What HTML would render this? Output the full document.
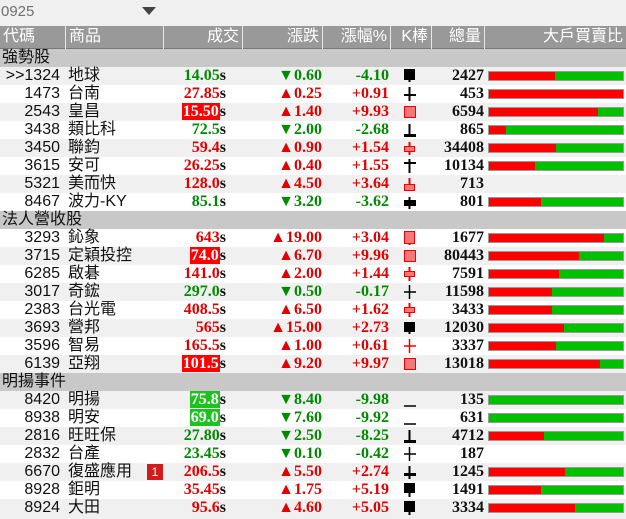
<!DOCTYPE html>
<html><head><meta charset="utf-8">
<style>
*{margin:0;padding:0;box-sizing:border-box}
body{width:626px;height:519px;background:#f0f0f0;overflow:hidden;position:relative;font-family:"Liberation Sans","Noto Sans CJK TC",sans-serif}
.top{position:absolute;left:0;top:0;width:626px;height:26px;background:#f0f0f0}
.top span{position:absolute;left:1px;top:3px;font-size:15px;color:#707070}
.tri{position:absolute;left:142px;top:7px;width:0;height:0;border-left:7px solid transparent;border-right:7px solid transparent;border-top:8px solid #444}
.hdr{position:absolute;left:0;top:26px;width:626px;height:23px;background:#999;border-bottom:1px solid #777}
.hdr div{position:absolute;top:0;height:23px;color:#fff;font-size:16px;line-height:22px;border-right:1px solid #e8e8e8;padding:0 3px}
.row{position:absolute;left:0;width:626px;height:18px;font-size:16px;line-height:18px}
.g{background:#c8c8c8;padding-left:2px;color:#111}
.a{background:#f0f0f0}.b{background:#fff}
.c{position:absolute;left:0;width:60px;text-align:right;color:#111}
.n{position:absolute;left:68px;color:#111}
.num{font-family:"Liberation Serif",serif;font-weight:bold;font-size:16px}
.p{position:absolute;right:400px;text-align:right}
.p i{font-style:normal;color:#111}
.ch{position:absolute;right:304px;text-align:right}
.pc{position:absolute;right:237px;text-align:right}
.v{position:absolute;right:142px;text-align:right;color:#111}
.k{position:absolute;left:402px;top:1px}
.bar{position:absolute;left:488px;top:4px;width:136px;height:10px;background:#00c000;border:1px solid #999}
.bar b{display:block;height:100%;background:#ff0000}
.R{color:#e00000}.G{color:#008a00}
.hr{background:#f00;color:#fff;padding:0 1px}
.hg{background:#1ec21e;color:#fff;padding:0 1px}
.badge{position:absolute;left:147px;top:1px;width:16px;height:16px;background:#d21c1c;color:#fff;font-size:12px;line-height:16px;text-align:center}
</style></head><body>
<div class="top"><span>0925</span><div class="tri"></div></div>
<div class="hdr">
<div style="left:0;width:66px">代碼</div>
<div style="left:66px;width:98px">商品</div>
<div style="left:164px;width:79px;text-align:right">成交</div>
<div style="left:243px;width:80px;text-align:right">漲跌</div>
<div style="left:323px;width:68px;text-align:right">漲幅%</div>
<div style="left:391px;width:41px;text-align:right">K棒</div>
<div style="left:432px;width:53px;text-align:right">總量</div>
<div style="left:485px;width:141px;text-align:right;border:none">大戶買賣比</div>
</div>

<div class="row g" style="top:49px">強勢股</div>
<div class="row a" style="top:67px"><span class="c">&gt;&gt;1324</span><span class="n">地球</span><span class="p num G">14.05<i>s</i></span><span class="ch num G">▼0.60</span><span class="pc num G">-4.10</span><svg class="k" width="16" height="16"><rect x="2" y="1" width="11" height="11" fill="#000"/><line x1="7.5" y1="12" x2="7.5" y2="14" stroke="#000" stroke-width="2"/></svg><span class="v num">2427</span><div class="bar"><b style="width:49%"></b></div></div>
<div class="row b" style="top:85px"><span class="c">1473</span><span class="n">台南</span><span class="p num R">27.85<i>s</i></span><span class="ch num R">▲0.25</span><span class="pc num R">+0.91</span><svg class="k" width="16" height="16"><line x1="7.5" y1="1" x2="7.5" y2="15" stroke="#000" stroke-width="2"/><line x1="2" y1="9" x2="14" y2="9" stroke="#000" stroke-width="2"/></svg><span class="v num">453</span><div class="bar"><b style="width:100%"></b></div></div>
<div class="row a" style="top:103px"><span class="c">2543</span><span class="n">皇昌</span><span class="p num"><span class="hr">15.50</span><i>s</i></span><span class="ch num R">▲1.40</span><span class="pc num R">+9.93</span><svg class="k" width="16" height="16"><rect x="2.5" y="2.5" width="11" height="11" fill="#f47878" stroke="#e00" /></svg><span class="v num">6594</span><div class="bar"><b style="width:81%"></b></div></div>
<div class="row b" style="top:121px"><span class="c">3438</span><span class="n">類比科</span><span class="p num G">72.5<i>s</i></span><span class="ch num G">▼2.00</span><span class="pc num G">-2.68</span><svg class="k" width="16" height="16"><line x1="7.5" y1="2" x2="7.5" y2="13" stroke="#000" stroke-width="2"/><rect x="2" y="12" width="12" height="3" fill="#000"/></svg><span class="v num">865</span><div class="bar"><b style="width:13%"></b></div></div>
<div class="row a" style="top:139px"><span class="c">3450</span><span class="n">聯鈞</span><span class="p num R">59.4<i>s</i></span><span class="ch num R">▲0.90</span><span class="pc num R">+1.54</span><svg class="k" width="16" height="16"><line x1="7.5" y1="2" x2="7.5" y2="15" stroke="#e00" stroke-width="2"/><rect x="2.5" y="6.5" width="10" height="5" fill="#f47878" stroke="#e00"/></svg><span class="v num">34408</span><div class="bar"><b style="width:50%"></b></div></div>
<div class="row b" style="top:157px"><span class="c">3615</span><span class="n">安可</span><span class="p num R">26.25<i>s</i></span><span class="ch num R">▲0.40</span><span class="pc num R">+1.55</span><svg class="k" width="16" height="16"><line x1="7.5" y1="1" x2="7.5" y2="15" stroke="#000" stroke-width="2"/><line x1="2" y1="5" x2="14" y2="5" stroke="#000" stroke-width="2"/></svg><span class="v num">10134</span><div class="bar"><b style="width:34%"></b></div></div>
<div class="row a" style="top:175px"><span class="c">5321</span><span class="n">美而快</span><span class="p num R">128.0<i>s</i></span><span class="ch num R">▲4.50</span><span class="pc num R">+3.64</span><svg class="k" width="16" height="16"><line x1="7.5" y1="2" x2="7.5" y2="9" stroke="#e00" stroke-width="2"/><rect x="2.5" y="8.5" width="10" height="6" fill="#f47878" stroke="#e00"/></svg><span class="v num">713</span></div>
<div class="row b" style="top:193px"><span class="c">8467</span><span class="n">波力-KY</span><span class="p num G">85.1<i>s</i></span><span class="ch num G">▼3.20</span><span class="pc num G">-3.62</span><svg class="k" width="16" height="16"><line x1="7.5" y1="3" x2="7.5" y2="15" stroke="#000" stroke-width="2"/><rect x="2" y="6" width="12" height="6" fill="#000"/></svg><span class="v num">801</span><div class="bar"><b style="width:39%"></b></div></div>

<div class="row g" style="top:211px">法人營收股</div>
<div class="row b" style="top:229px"><span class="c">3293</span><span class="n">鈊象</span><span class="p num R">643<i>s</i></span><span class="ch num R">▲19.00</span><span class="pc num R">+3.04</span><svg class="k" width="16" height="16"><rect x="2.5" y="1.5" width="10" height="12" fill="#f47878" stroke="#e00"/><line x1="7.5" y1="13" x2="7.5" y2="15" stroke="#e00" stroke-width="2"/></svg><span class="v num">1677</span><div class="bar"><b style="width:86%"></b></div></div>
<div class="row a" style="top:247px"><span class="c">3715</span><span class="n">定穎投控</span><span class="p num"><span class="hr">74.0</span><i>s</i></span><span class="ch num R">▲6.70</span><span class="pc num R">+9.96</span><svg class="k" width="16" height="16"><rect x="2.5" y="2.5" width="11" height="11" fill="#f47878" stroke="#e00"/></svg><span class="v num">80443</span><div class="bar"><b style="width:67%"></b></div></div>
<div class="row b" style="top:265px"><span class="c">6285</span><span class="n">啟碁</span><span class="p num R">141.0<i>s</i></span><span class="ch num R">▲2.00</span><span class="pc num R">+1.44</span><svg class="k" width="16" height="16"><line x1="7.5" y1="1" x2="7.5" y2="15" stroke="#e00" stroke-width="2"/><rect x="2.5" y="5.5" width="10" height="5" fill="#f47878" stroke="#e00"/></svg><span class="v num">7591</span><div class="bar"><b style="width:52%"></b></div></div>
<div class="row a" style="top:283px"><span class="c">3017</span><span class="n">奇鋐</span><span class="p num G">297.0<i>s</i></span><span class="ch num G">▼0.50</span><span class="pc num G">-0.17</span><svg class="k" width="16" height="16"><line x1="7.5" y1="1" x2="7.5" y2="15" stroke="#000" stroke-width="1.5"/><line x1="2" y1="8" x2="14" y2="8" stroke="#000" stroke-width="1.5"/></svg><span class="v num">11598</span><div class="bar"><b style="width:47%"></b></div></div>
<div class="row b" style="top:301px"><span class="c">2383</span><span class="n">台光電</span><span class="p num R">408.5<i>s</i></span><span class="ch num R">▲6.50</span><span class="pc num R">+1.62</span><svg class="k" width="16" height="16"><line x1="7.5" y1="1" x2="7.5" y2="15" stroke="#e00" stroke-width="2"/><rect x="2.5" y="5.5" width="10" height="5" fill="#f47878" stroke="#e00"/></svg><span class="v num">3433</span><div class="bar"><b style="width:47%"></b></div></div>
<div class="row a" style="top:319px"><span class="c">3693</span><span class="n">營邦</span><span class="p num R">565<i>s</i></span><span class="ch num R">▲15.00</span><span class="pc num R">+2.73</span><svg class="k" width="16" height="16"><rect x="2" y="2" width="11" height="10" fill="#000"/><line x1="7.5" y1="11" x2="7.5" y2="14" stroke="#000" stroke-width="2"/></svg><span class="v num">12030</span><div class="bar"><b style="width:56%"></b></div></div>
<div class="row b" style="top:337px"><span class="c">3596</span><span class="n">智易</span><span class="p num R">165.5<i>s</i></span><span class="ch num R">▲1.00</span><span class="pc num R">+0.61</span><svg class="k" width="16" height="16"><line x1="7.5" y1="1" x2="7.5" y2="15" stroke="#e00" stroke-width="1.5"/><line x1="2" y1="8" x2="14" y2="8" stroke="#e00" stroke-width="1.5"/></svg><span class="v num">3337</span><div class="bar"><b style="width:50%"></b></div></div>
<div class="row a" style="top:355px"><span class="c">6139</span><span class="n">亞翔</span><span class="p num"><span class="hr">101.5</span><i>s</i></span><span class="ch num R">▲9.20</span><span class="pc num R">+9.97</span><svg class="k" width="16" height="16"><rect x="2.5" y="2.5" width="11" height="11" fill="#f47878" stroke="#e00"/></svg><span class="v num">13018</span><div class="bar"><b style="width:83%"></b></div></div>

<div class="row g" style="top:373px">明揚事件</div>
<div class="row a" style="top:391px"><span class="c">8420</span><span class="n">明揚</span><span class="p num"><span class="hg">75.8</span><i>s</i></span><span class="ch num G">▼8.40</span><span class="pc num G">-9.98</span><svg class="k" width="16" height="16"><line x1="2" y1="14" x2="14" y2="14" stroke="#000" stroke-width="1.5"/></svg><span class="v num">135</span><div class="bar"><b style="width:0"></b></div></div>
<div class="row b" style="top:409px"><span class="c">8938</span><span class="n">明安</span><span class="p num"><span class="hg">69.0</span><i>s</i></span><span class="ch num G">▼7.60</span><span class="pc num G">-9.92</span><svg class="k" width="16" height="16"><line x1="2" y1="14" x2="14" y2="14" stroke="#000" stroke-width="1.5"/></svg><span class="v num">631</span><div class="bar"><b style="width:0"></b></div></div>
<div class="row a" style="top:427px"><span class="c">2816</span><span class="n">旺旺保</span><span class="p num G">27.80<i>s</i></span><span class="ch num G">▼2.50</span><span class="pc num G">-8.25</span><svg class="k" width="16" height="16"><line x1="7.5" y1="2" x2="7.5" y2="13" stroke="#000" stroke-width="2"/><rect x="2" y="12" width="12" height="3" fill="#000"/></svg><span class="v num">4712</span><div class="bar"><b style="width:41%"></b></div></div>
<div class="row b" style="top:445px"><span class="c">2832</span><span class="n">台產</span><span class="p num G">23.45<i>s</i></span><span class="ch num G">▼0.10</span><span class="pc num G">-0.42</span><svg class="k" width="16" height="16"><line x1="7.5" y1="1" x2="7.5" y2="15" stroke="#000" stroke-width="1.5"/><line x1="2" y1="8" x2="14" y2="8" stroke="#000" stroke-width="1.5"/></svg><span class="v num">187</span></div>
<div class="row a" style="top:463px"><span class="c">6670</span><span class="n">復盛應用</span><span class="badge">1</span><span class="p num R">206.5<i>s</i></span><span class="ch num R">▲5.50</span><span class="pc num R">+2.74</span><svg class="k" width="16" height="16"><line x1="7.5" y1="2" x2="7.5" y2="15" stroke="#000" stroke-width="2"/><rect x="2" y="9" width="12" height="3" fill="#000"/></svg><span class="v num">1245</span><div class="bar"><b style="width:57%"></b></div></div>
<div class="row b" style="top:481px"><span class="c">8928</span><span class="n">鉅明</span><span class="p num R">35.45<i>s</i></span><span class="ch num R">▲1.75</span><span class="pc num R">+5.19</span><svg class="k" width="16" height="16"><rect x="2" y="1" width="11" height="10" fill="#000"/><line x1="7.5" y1="10" x2="7.5" y2="15" stroke="#000" stroke-width="2"/></svg><span class="v num">1491</span><div class="bar"><b style="width:39%"></b></div></div>
<div class="row a" style="top:499px"><span class="c">8924</span><span class="n">大田</span><span class="p num R">95.6<i>s</i></span><span class="ch num R">▲4.60</span><span class="pc num R">+5.05</span><svg class="k" width="16" height="16"><rect x="2" y="1" width="11" height="11" fill="#000"/><line x1="7.5" y1="11" x2="7.5" y2="15" stroke="#000" stroke-width="2"/></svg><span class="v num">3334</span><div class="bar"><b style="width:64%"></b></div></div>
</body></html>
